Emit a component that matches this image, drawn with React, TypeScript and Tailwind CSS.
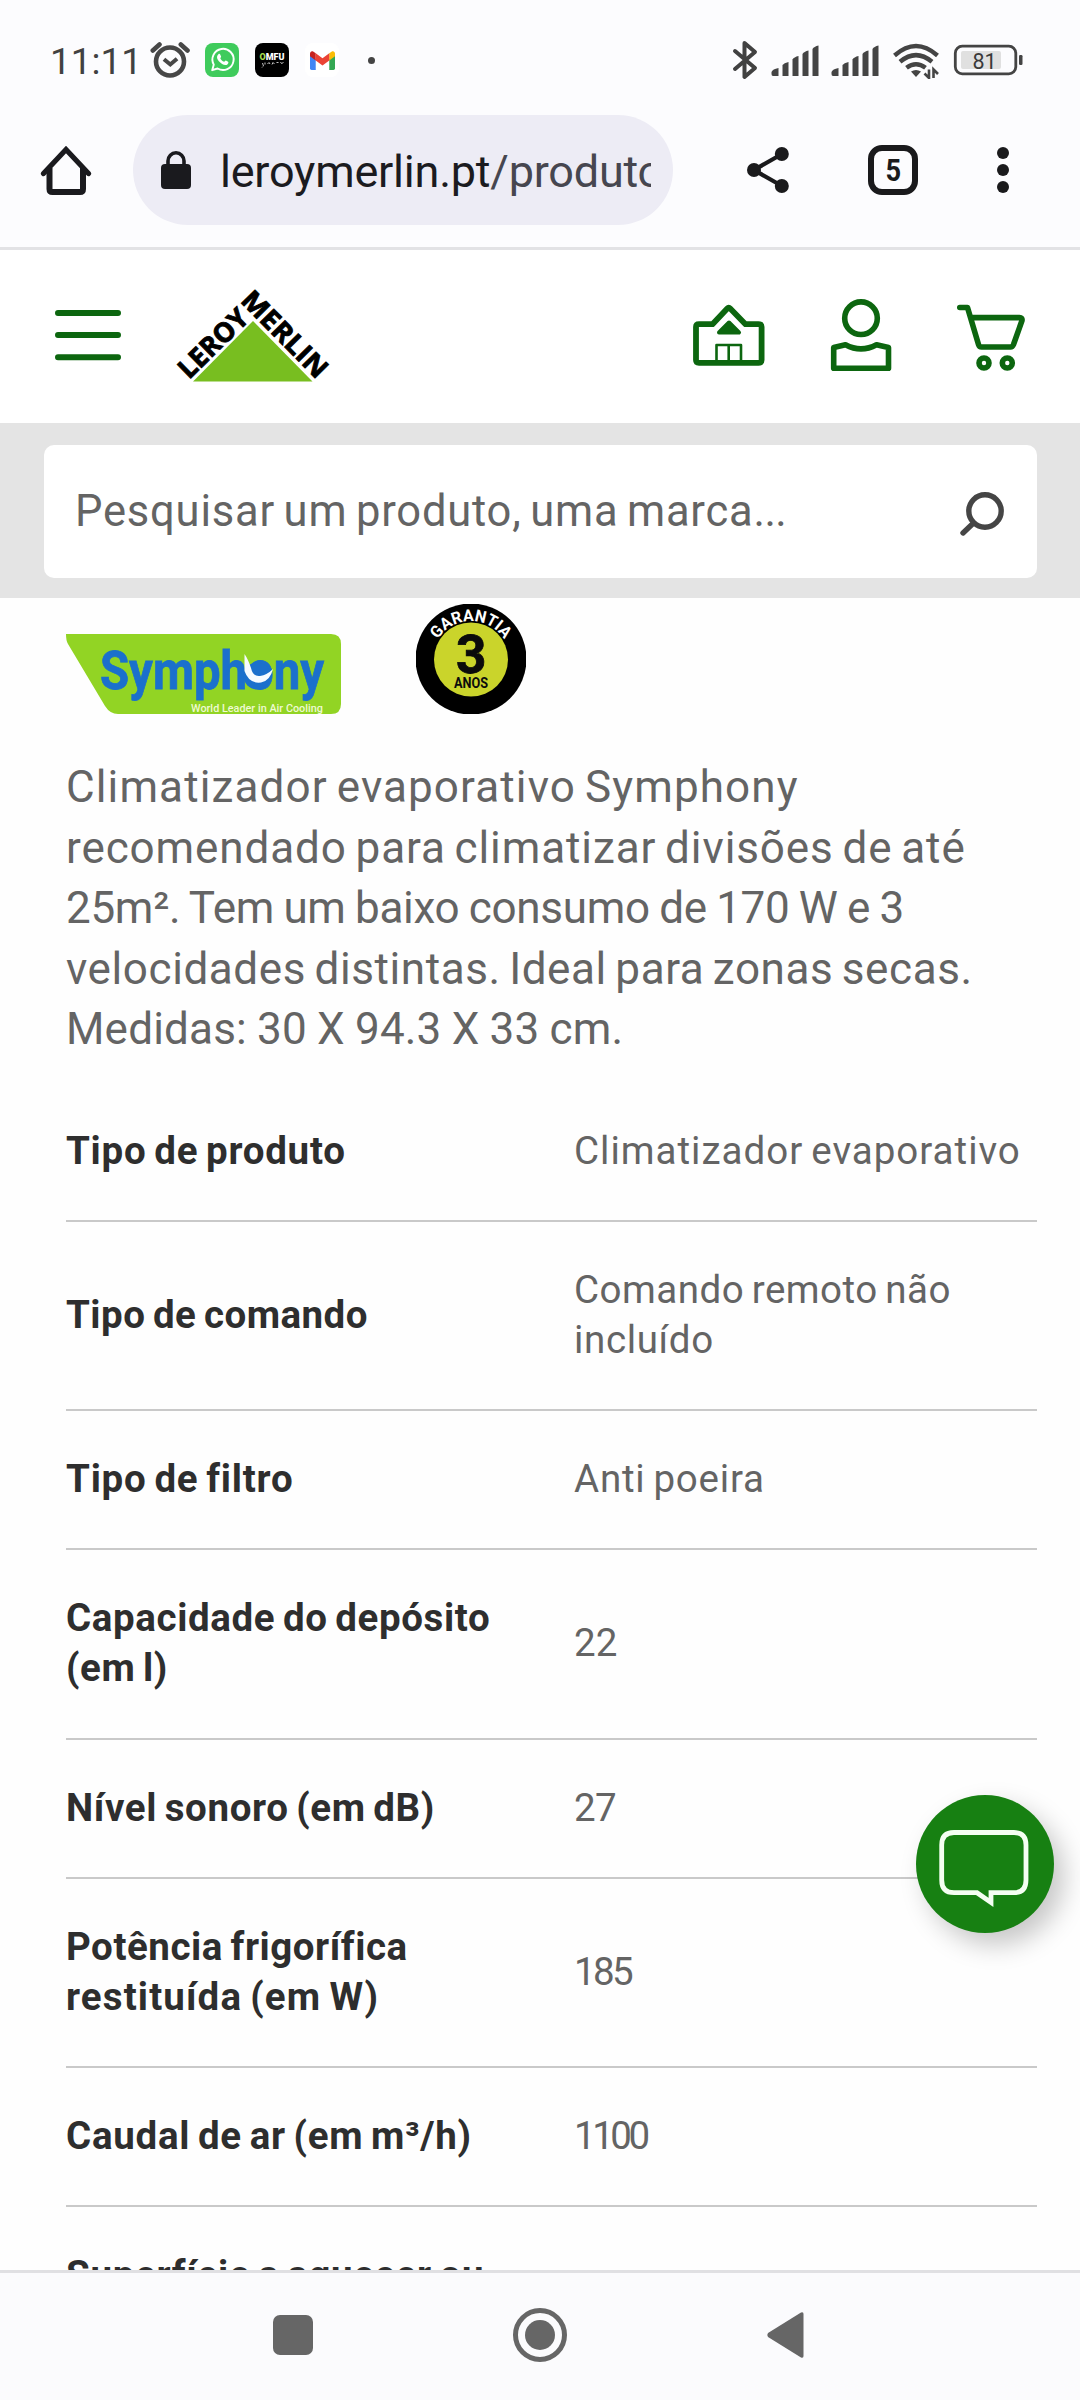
import React from "react";

interface Line {
  text: string;
  tracking: string;
}

interface Spec {
  label: Line[];
  value: Line[];
}

const description: Line[] = [
  { text: "Climatizador evaporativo Symphony", tracking: "tracking-[1.120px] [word-spacing:-3px]" },
  { text: "recomendado para climatizar divisões de até", tracking: "tracking-[0.900px] [word-spacing:-3px]" },
  { text: "25m². Tem um baixo consumo de 170 W e 3", tracking: "tracking-[-0.300px] [word-spacing:-1.200px]" },
  { text: "velocidades distintas. Ideal para zonas secas.", tracking: "tracking-[0.590px] [word-spacing:-3px]" },
  { text: "Medidas: 30 X 94.3 X 33 cm.", tracking: "tracking-[0.200px] [word-spacing:-1px]" },
];

const specs: Spec[] = [
  {
    label: [{ text: "Tipo de produto", tracking: "tracking-[0.750px]" }],
    value: [{ text: "Climatizador evaporativo", tracking: "tracking-[1px]" }],
  },
  {
    label: [{ text: "Tipo de comando", tracking: "tracking-[0.480px]" }],
    value: [
      { text: "Comando remoto não", tracking: "tracking-[0.500px]" },
      { text: "incluído", tracking: "tracking-[0.650px]" },
    ],
  },
  {
    label: [{ text: "Tipo de filtro", tracking: "tracking-[0.780px]" }],
    value: [{ text: "Anti poeira", tracking: "tracking-[0.800px]" }],
  },
  {
    label: [
      { text: "Capacidade do depósito", tracking: "tracking-[0.620px]" },
      { text: "(em l)", tracking: "tracking-[0.600px]" },
    ],
    value: [{ text: "22", tracking: "tracking-[0.200px]" }],
  },
  {
    label: [{ text: "Nível sonoro (em dB)", tracking: "tracking-[0.620px]" }],
    value: [{ text: "27", tracking: "tracking-[-0.600px]" }],
  },
  {
    label: [
      { text: "Potência frigorífica", tracking: "tracking-[0.550px]" },
      { text: "restituída (em W)", tracking: "tracking-[1.120px]" },
    ],
    value: [{ text: "185", tracking: "tracking-[-2.600px]" }],
  },
  {
    label: [{ text: "Caudal de ar (em m³/h)", tracking: "tracking-[0.720px]" }],
    value: [{ text: "1100", tracking: "tracking-[-3.500px]" }],
  },
  {
    label: [
      { text: "Superfície a aquecer ou", tracking: "tracking-[0.700px]" },
      { text: "arrefecer (em m²)", tracking: "tracking-[0.650px]" },
    ],
    value: [{ text: "25", tracking: "tracking-[0.200px]" }],
  },
];

const AlarmIcon = () => (
  <svg className="w-[40px] h-[38px]" viewBox="150 41 40 38" fill="none" stroke="#474747" strokeWidth="4.6" strokeLinecap="round">
    <circle cx="170" cy="61.5" r="14" />
    <path d="M152.8 50.5 L159.5 44.5 M187.5 50.5 L180.8 44.5" />
    <path d="M165.5 60.5 L170.3 64.5 L175.5 60" strokeWidth="4" strokeLinecap="square" />
  </svg>
);

const WhatsappIcon = () => (
  <svg className="w-[34px] h-[34px] ml-[15px]" viewBox="0 0 34 34">
    <rect width="34" height="34" rx="8" fill="#3fcb5c" />
    <path d="M7.2 27.2 L8.8 21.6 A10.6 10.6 0 1 1 12.6 25.5 Z" fill="none" stroke="#fff" strokeWidth="1.9" strokeLinejoin="round" />
    <path d="M13.4 11.2 c.7-.7 1.5-.5 1.8.2 l.9 2.1 c.2.6-.9 1.4-.8 1.8 .9 1.8 2 2.8 3.8 3.5 .5.2 1.2-1.4 1.8-1.2 l2.2 1.1 c.6.4.2 1.8-.5 2.5 -2.3 2.2-6.4-.4-8.2-2.4 -1.9-2.1-3.6-5.2-1-7.6z" fill="#fff" />
  </svg>
);

const OmfuIcon = () => (
  <svg className="w-[34px] h-[34px] ml-[16px]" viewBox="0 0 34 34" fontFamily="Roboto, sans-serif">
    <rect width="34" height="34" rx="8" fill="#000" />
    <text x="4.5" y="16.5" fontSize="9" fontWeight="900" fill="#fff" textLength="25" lengthAdjust="spacingAndGlyphs">
      <tspan fill="#a6dc4b">O</tspan>MFU
    </text>
    <path d="M7.5 20 l1 3 M10 19.5 v2 M12.5 21 l1.5-1.5 1 1.5 M17 21.5 l1-2 1.5 1.5 M21.5 19.5 h2 M25.5 19 l1 1.5 2-1 M8 23.5 l-1 1" fill="none" stroke="#ddd" strokeWidth="0.9" />
  </svg>
);

const GmailIcon = () => (
  <div className="w-[34px] h-[34px] ml-[16px] rounded-[8px] bg-white flex items-center justify-center">
    <svg className="w-[25px] h-[19px]" viewBox="0 0 24 18">
      <path d="M0 3 V16.5 A1.5 1.5 0 0 0 1.5 18 H5.5 V8 Z" fill="#4285f4" />
      <path d="M24 3 V16.5 A1.5 1.5 0 0 1 22.5 18 H18.5 V8 Z" fill="#34a853" />
      <path d="M18.5 2 L21 .4 C22.5 -.5 24 .8 24 2.5 V5 L18.5 9 Z" fill="#fbbc04" />
      <path d="M5.5 2 L3 .4 C1.5 -.5 0 .8 0 2.5 V5 L5.5 9 Z" fill="#c5221f" />
      <path d="M5.5 2 L12 6.8 L18.5 2 V9 L12 13.7 L5.5 9 Z" fill="#ea4335" />
    </svg>
  </div>
);

const BluetoothIcon = () => (
  <svg className="w-[26px] h-[40px]" viewBox="733 40 26 40" fill="none" stroke="#414141" strokeWidth="4" strokeLinejoin="round" strokeLinecap="round">
    <path d="M736 51 L756 68 L745.5 77 V43 L756 52 L736 69" />
  </svg>
);

const SignalIcon = () => (
  <svg className="w-[48px] h-[32px]" viewBox="0 0 48 32" fill="#444">
    <path d="M.5 27 Q1.5 24 7.5 23 V31 H2 Q.5 31 .5 29 Z" />
    <path d="M11.5 20 Q13 17.8 17.5 17 V31 H11.5 Z" />
    <path d="M21.5 14.5 Q23 12 27.5 11 V31 H21.5 Z" />
    <path d="M31.5 9 Q33 6.5 37.5 5.5 V31 H31.5 Z" />
    <path d="M41.5 4 Q43 1.5 47.5 .5 V31 H41.5 Z" />
  </svg>
);

const WifiIcon = () => (
  <svg className="w-[48px] h-[37px] ml-[13px]" viewBox="892 42 48 37" fill="none" stroke="#444" strokeWidth="4.4">
    <path d="M894.5 55.5 Q916 36.5 937.5 55.5" />
    <path d="M900 61.8 Q916 48.5 932 61.8" />
    <path d="M906.5 67.8 Q916 60.5 925.5 67.8" />
    <path d="M911 71.5 Q916 68.5 921 71.5 L916 77 Z" fill="#444" stroke="none" />
    <path d="M929 69.5 V78 L924.5 73.5 M933.5 78 V69.5 L938 74" strokeWidth="2.6" />
  </svg>
);

const BatteryIcon = () => (
  <svg className="w-[70px] h-[32px] ml-[13px]" viewBox="953 44 70 32">
    <rect x="955.3" y="46.2" width="60.5" height="27.6" rx="7" fill="none" stroke="#444" strokeWidth="2.8" />
    <rect x="961" y="51" width="40" height="18" rx="2" fill="#e0e0e0" />
    <text x="972.5" y="69" fontSize="21.5" fontFamily="Roboto, sans-serif" fill="#3a3a3a">81</text>
    <rect x="1019" y="55" width="3.5" height="10" rx="1.2" fill="#444" />
  </svg>
);

const StatusBar = () => (
  <div className="h-[115px] shrink-0 pt-[40px]">
    <div className="h-[40px] flex items-center">
      <span className="w-[100px] ml-[50px] pt-[3px] text-[37px] leading-none text-[#414141]">11:11</span>
      <AlarmIcon />
      <WhatsappIcon />
      <OmfuIcon />
      <GmailIcon />
      <div className="w-[7px] h-[7px] ml-[29px] rounded-full bg-[#444]" />
      <div className="ml-auto pr-[57px] flex items-center">
        <BluetoothIcon />
        <div className="flex gap-[12px] ml-[13px] pt-[2px]">
          <SignalIcon />
          <SignalIcon />
        </div>
        <WifiIcon />
        <BatteryIcon />
      </div>
    </div>
  </div>
);

const BrowserBar = () => (
  <div className="h-[135px] shrink-0 border-b-[3px] border-[#e2e2e5]">
    <div className="h-[110px] flex items-center">
      <svg className="w-[52px] h-[52px] ml-[40px]" viewBox="40 144 52 52" fill="none" stroke="#1a1a1e" strokeWidth="6">
        <path d="M49.5 168 V189 Q49.5 192 52.5 192 H80 Q83 192 83 189 V168" />
        <path d="M43.5 173.5 L66 149.5 L88.5 173.5" strokeLinejoin="miter" strokeLinecap="round" strokeWidth="5.2" />
      </svg>
      <div className="w-[540px] h-[110px] ml-[41px] rounded-full bg-[#edecf5] flex items-center">
        <svg className="w-[30px] h-[40px] ml-[28px]" viewBox="161 149 30 40">
          <rect x="161" y="163" width="30" height="25" rx="4" fill="#1a1a1e" />
          <path d="M168 164 V160 A8 8.2 0 0 1 184 160 V164" fill="none" stroke="#1a1a1e" strokeWidth="3.6" />
        </svg>
        <div className="w-[431px] ml-[29px] pt-[3px] overflow-hidden whitespace-nowrap text-[45px] leading-[56px] tracking-[-0.220px] text-[#1b1b20]">
          leroymerlin.pt<span className="text-[#46464f]">/produto</span>
        </div>
      </div>
      <svg className="w-[44px] h-[48px] ml-[73px]" viewBox="746 147 44 48" fill="#1a1a1c">
        <path d="M782 155 L754 171 L782 187" fill="none" stroke="#1a1a1c" strokeWidth="4.2" />
        <circle cx="754" cy="171" r="7" />
        <circle cx="781.8" cy="155" r="7" />
        <circle cx="781.8" cy="187" r="7" />
      </svg>
      <div className="w-[50px] h-[50px] ml-[78px] rounded-[14px] border-[6px] border-[#1a1a1c] flex items-center justify-center text-[32px] leading-none font-bold text-[#1a1a1c]">
        <span className="scale-x-[0.850]">5</span>
      </div>
      <div className="ml-[79px] flex flex-col gap-[5px]">
        <div className="w-[12px] h-[12px] rounded-full bg-[#1a1a1c]" />
        <div className="w-[12px] h-[12px] rounded-full bg-[#1a1a1c]" />
        <div className="w-[12px] h-[12px] rounded-full bg-[#1a1a1c]" />
      </div>
    </div>
  </div>
);

const SiteHeader = () => (
  <header className="h-[173px] shrink-0 pt-[35px] flex bg-white">
    <svg className="w-[66px] h-[100px] ml-[55px]" viewBox="55 285 66 100" stroke="#0c660f" strokeWidth="6" strokeLinecap="round">
      <path d="M58 313 H118 M58 335 H118 M58 357.3 H118" />
    </svg>
    <svg className="w-[160px] h-[100px] ml-[53px]" viewBox="174 285 160 100" fontFamily="Open Sans, Lato, sans-serif" fontWeight="700" fontSize="27">
      <path d="M253 321 L312.5 381.5 H193 Z" fill="#78be20" />
      <g stroke="#000" strokeWidth="0.9">
        <text transform="translate(189 380) rotate(-44.5)" textLength="86" lengthAdjust="spacingAndGlyphs">LEROY</text>
        <text transform="translate(239.5 301.5) rotate(45.4)" textLength="110" lengthAdjust="spacingAndGlyphs">MERLIN</text>
      </g>
    </svg>
    <svg className="w-[72px] h-[100px] ml-[359px]" viewBox="693 285 72 100" fill="none" stroke="#0c660f" strokeWidth="5.8" strokeLinejoin="round">
      <path d="M696 327 Q696 324.2 699 324.2 H712.5 L727.3 308.5 Q728.7 307 730.2 308.5 L745.5 324.2 H758.5 Q761.6 324.2 761.6 327 V360 Q761.6 362.8 758.5 362.8 H699 Q696 362.8 696 360 Z" />
      <path d="M729 322.5 L739 332.5 H719 Z" fill="#0c660f" strokeWidth="4" />
      <path d="M716.5 362 V345 H741 V362 M728.7 345 V362" strokeWidth="2.6" />
    </svg>
    <svg className="w-[62px] h-[100px] ml-[65px]" viewBox="830 285 62 100" fill="none" stroke="#0c660f" strokeWidth="5.6" strokeLinejoin="round">
      <circle cx="861" cy="318.2" r="16.3" />
      <path d="M833.7 347.5 L845.5 344.7 Q861 353 876.5 344.7 L888.5 347.5 V368.3 H833.7 Z" />
    </svg>
    <svg className="w-[70px] h-[100px] ml-[64px]" viewBox="956 285 70 100" fill="none" stroke="#0c660f" strokeWidth="5.6" strokeLinejoin="round" strokeLinecap="round">
      <path d="M959.8 307.5 H967.5 L978.5 344.5 Q979.3 347 981.5 347 H1010.5 Q1012.5 347 1013.5 344.5 L1022 320.5 Q1022.5 317.6 1019.5 317.6 H972" />
      <circle cx="984" cy="363" r="5" />
      <circle cx="1007.3" cy="363" r="5" />
    </svg>
  </header>
);

const SearchBar = () => (
  <div className="h-[175px] shrink-0 pt-[22px] px-[44px] bg-[#e4e4e4]">
    <div className="w-[993px] h-[133px] rounded-[10px] bg-white flex items-center justify-between pl-[31px] pr-[32px]">
      <span className="text-[43.500px] leading-[60px] tracking-[0.800px] [word-spacing:-3px] text-[#646464]">
        Pesquisar um produto, uma marca<span className="tracking-[-0.600px]">...</span>
      </span>
      <svg className="w-[46px] h-[46px] mt-[4px]" viewBox="959 491 46 46" fill="none" stroke="#454545" strokeWidth="5.4" strokeLinecap="round">
        <circle cx="985" cy="511" r="16.2" />
        <path d="M973 523.5 L963 533" />
      </svg>
    </div>
  </div>
);

const BrandLogos = () => (
  <div className="h-[110px] flex items-end">
    <svg className="w-[275px] h-[80px]" viewBox="66 634 275 80" fontFamily="Roboto, sans-serif">
      <path d="M66 634 H331 Q341 634 341 644 V704 Q341 714 331 714 H118 Q110 714 105 706 L68 644 Q66 641 66 634 Z" fill="#92d424" />
      <text x="100" y="688.5" fontSize="54" fontWeight="700" fill="#1b70cc" stroke="#1b70cc" strokeWidth="0.8" textLength="224" lengthAdjust="spacingAndGlyphs">Symphony</text>
      <circle cx="257" cy="676" r="13.5" fill="#1b70cc" />
      <path d="M244.5 654 Q248 659 251 668 Q253 677 260 676 Q267 675 273 669 Q270 681 261 682.5 Q249 684 244.5 671 Z" fill="#f6fbff" />
      <text x="191" y="711.5" fontSize="10.5" fontWeight="500" fill="#eefad2" textLength="132" lengthAdjust="spacingAndGlyphs">World Leader in Air Cooling</text>
    </svg>
    <svg className="w-[110px] h-[110px] ml-[75px]" viewBox="416 604 110 110" fontFamily="Roboto, sans-serif" fontWeight="700" textAnchor="middle">
      <circle cx="471" cy="659" r="55.5" fill="#000" />
      <circle cx="471" cy="659.5" r="37" fill="#cad42b" />
      <path id="badge-ring" d="M432 660 A39 39 0 0 1 510 660" fill="none" />
      <text fontSize="16.5" fill="#fff">
        <textPath href="#badge-ring" startOffset="50%" textLength="79" lengthAdjust="spacingAndGlyphs">GARANTIA</textPath>
      </text>
      <text x="471.3" y="673" fontSize="53" fill="#0b0b0b" stroke="#0b0b0b" strokeWidth="0.8">3</text>
      <text x="471" y="688" fontSize="14" fill="#0b0b0b" textLength="34" lengthAdjust="spacingAndGlyphs">ANOS</text>
    </svg>
  </div>
);

const SpecRow = ({ label, value }: Spec) => (
  <div className="w-[971px] shrink-0 flex items-center pt-[43px] pb-[44.250px] border-b-2 border-[#c9c9c9] text-[38.500px] leading-[50px] [word-spacing:-2.500px] whitespace-nowrap">
    <div className="w-[508px] font-bold text-[#2e2e2e]">
      {label.map((line) => (
        <div key={line.text} className={line.tracking}>{line.text}</div>
      ))}
    </div>
    <div className="text-[#646464]">
      {value.map((line) => (
        <div key={line.text} className={line.tracking}>{line.text}</div>
      ))}
    </div>
  </div>
);

const ChatButton = () => (
  <button className="absolute left-[916px] top-[1795px] w-[138px] h-[138px] rounded-full bg-[#178012] shadow-[10px_12px_26px_rgba(0,0,0,0.220)]">
    <svg className="w-[138px] h-[138px]" viewBox="916 1795 138 138" fill="none" stroke="#f4fff2" strokeWidth="4.8">
      <path d="M954 1832.5 H1014 Q1026 1832.5 1026 1845 V1880 Q1026 1892.7 1014 1892.7 H991 V1902.5 L977 1892.7 H954 Q941.7 1892.7 941.7 1880 V1845 Q941.7 1832.5 954 1832.5 Z" />
    </svg>
  </button>
);

const NavBar = () => (
  <nav className="h-[130px] shrink-0 border-t-[3px] border-[#e0e0e3] bg-[#fbfbfd] flex items-center pb-[3px]">
    <div className="w-[40px] h-[40px] ml-[273px] rounded-[7px] bg-[#666]" />
    <div className="w-[54px] h-[54px] ml-[200px] rounded-full border-[5px] border-[#666] flex items-center justify-center">
      <div className="w-[30px] h-[30px] rounded-full bg-[#666]" />
    </div>
    <svg className="w-[38px] h-[48px] ml-[199px]" viewBox="0 0 38 48">
      <path d="M2 22 L35 1.5 Q37.5 .5 37.5 3 V45 Q37.5 47.5 35 46.5 L2 26 Q.5 24 2 22 Z" fill="#666" />
    </svg>
  </nav>
);

export default function App() {
  return (
    <div className="relative w-[1080px] h-[2400px] overflow-hidden flex flex-col bg-[#fcfcfe] font-[Roboto,sans-serif]">
      <StatusBar />
      <BrowserBar />
      <SiteHeader />
      <SearchBar />
      <main className="flex-1 min-h-0 overflow-hidden flex flex-col bg-[#fefefe] pt-[6px] pl-[66px]">
        <BrandLogos />
        <div className="pt-[43px] pb-[23px] text-[44px] leading-[60.500px] text-[#646464] whitespace-nowrap">
          {description.map((line) => (
            <div key={line.text} className={line.tracking}>{line.text}</div>
          ))}
        </div>
        {specs.map((spec) => (
          <SpecRow key={spec.label[0].text} {...spec} />
        ))}
      </main>
      <NavBar />
      <ChatButton />
    </div>
  );
}
